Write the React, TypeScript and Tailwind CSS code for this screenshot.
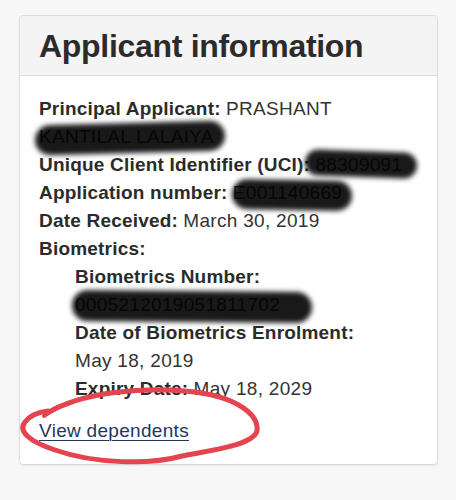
import React from "react";

const label = "font-bold tracking-[0.2px] text-[#2b2b2b]";
const value = "font-light tracking-[0.3px] text-[#333]";

function Scribble({ className }: { className: string }) {
  return (
    <span
      aria-hidden
      className={`pointer-events-none absolute rounded-full bg-black/90 blur-[2.5px] ${className}`}
    />
  );
}

export default function App() {
  return (
    <div
      className="min-h-[500px] w-[456px] bg-[#f7f7f7] pt-[15px] pl-[19px]"
      style={{ fontFamily: '"Liberation Sans", Arial, sans-serif' }}
    >
      <div className="relative w-[419px] overflow-visible rounded-[4px] border border-[#dcdcdc] bg-white shadow-[0_1px_2px_rgba(0,0,0,0.06)]">
        <div className="h-[60px] rounded-t-[4px] border-b border-[#dcdcdc] bg-[#f4f4f4] pl-[19px] pt-[10px]">
          <h1 className="text-[32px] font-bold leading-[40px] tracking-[-0.3px] text-[#2b2b2b]">
            Applicant information
          </h1>
        </div>

        <div className="relative px-[19px] pt-[19px] pb-[19px] text-[19px] leading-[28px]">
          <div>
            <span className={label}>Principal Applicant:</span>{" "}
            <span className={value}>
              PRASHANT
              <br />
              KANTILAL LALAIYA
            </span>
          </div>
          <div>
            <span className={label}>Unique Client Identifier (UCI):</span>{" "}
            <span className={value}>88309091</span>
          </div>
          <div>
            <span className={label}>Application number:</span>{" "}
            <span className={value}>E001140669</span>
          </div>
          <div>
            <span className={label}>Date Received:</span>{" "}
            <span className={value}>March 30, 2019</span>
          </div>
          <div className={label}>Biometrics:</div>
          <div className="pl-[36px]">
            <div className={label}>Biometrics Number:</div>
            <div className={value}>0005212019051811702</div>
            <div className={label}>Date of Biometrics Enrolment:</div>
            <div className={value}>May 18, 2019</div>
            <div>
              <span className={label}>Expiry Date:</span>{" "}
              <span className={value}>May 18, 2029</span>
            </div>
          </div>
          <div className="mt-[14px]">
            <a
              href="#"
              className="font-light tracking-[0.3px] text-[#23365f] underline decoration-1 underline-offset-[3px]"
            >
              View dependents
            </a>
          </div>

          {/* marker strokes over the private details */}
          <Scribble className="left-[15px] top-[47px] h-[30px] w-[190px] -rotate-[1.5deg]" />
          <Scribble className="left-[285px] top-[75px] h-[26px] w-[112px] rotate-[2deg]" />
          <Scribble className="left-[212px] top-[104px] h-[30px] w-[120px] rotate-[1deg]" />
          <Scribble className="left-[52px] top-[215px] h-[31px] w-[240px] rotate-[0.5deg]" />
        </div>

        {/* red pen circle around the link */}
        <svg
          className="pointer-events-none absolute left-[-20px] top-[-16px]"
          width="456"
          height="500"
          viewBox="0 0 456 500"
          fill="none"
        >
          <path
            d="M44 416 C 52 409, 58 406, 68 404"
            stroke="#e5434f"
            strokeWidth="4"
            strokeLinecap="round"
          />
          <path
            d="M46 414 C 80 392, 145 386, 195 392 C 240 398, 259 416, 257 431 C 253 446, 205 451, 182 456 C 150 465, 95 464, 55 450 C 28 441, 18 431, 25 422 C 31 414, 40 412, 48 411"
            stroke="#e5434f"
            strokeWidth="5"
            strokeLinecap="round"
            strokeLinejoin="round"
          />
        </svg>
      </div>
    </div>
  );
}
